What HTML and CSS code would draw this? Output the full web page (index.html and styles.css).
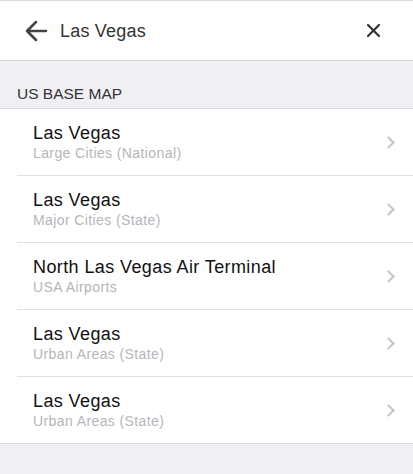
FILE: index.html
```html
<!DOCTYPE html>
<html lang="en">
<head>
  <meta charset="UTF-8">
  <title>Search</title>
  <link rel="stylesheet" href="styles.css">
</head>
<body>
  <div class="search-bar">
    <span class="back">
      <svg width="24" height="22" viewBox="0 0 24 22"><path d="M22 11H3M12 2L3 11l9 9" fill="none" stroke="#444" stroke-width="2.6" stroke-linecap="round" stroke-linejoin="round"/></svg>
    </span>
    <span class="query">Las Vegas</span>
    <span class="clear">
      <svg width="15" height="15" viewBox="0 0 15 15"><path d="M2 2l11 11M13 2L2 13" fill="none" stroke="#333" stroke-width="2.2" stroke-linecap="round"/></svg>
    </span>
  </div>

  <div class="section">US BASE MAP</div>

  <ul class="results">
    <li><div class="txt"><div class="title">Las Vegas</div><div class="sub">Large Cities (National)</div></div><span class="chev"></span></li>
    <li><div class="txt"><div class="title">Las Vegas</div><div class="sub">Major Cities (State)</div></div><span class="chev"></span></li>
    <li><div class="txt"><div class="title">North Las Vegas Air Terminal</div><div class="sub">USA Airports</div></div><span class="chev"></span></li>
    <li><div class="txt"><div class="title">Las Vegas</div><div class="sub">Urban Areas (State)</div></div><span class="chev"></span></li>
    <li><div class="txt"><div class="title">Las Vegas</div><div class="sub">Urban Areas (State)</div></div><span class="chev"></span></li>
  </ul>
</body>
</html>
```

FILE: styles.css
```css
* {
	margin: 0;
	padding: 0;
	box-sizing: border-box;
}

body {
	background: #efeff4;
	font-family: "Liberation Sans", Arial, sans-serif;
	color: #111;
	height: 474px;
	overflow: hidden;
}

.search-bar {
	display: flex;
	align-items: center;
	height: 61px;
	background: #fff;
	border-top: 1px solid #d6d9e0;
	border-bottom: 1px solid #d3d3d6;
	padding: 0 0 0 24px;
}

.back {
	display: flex;
	width: 36px;
}

.query {
	flex: 1;
	font-size: 18px;
	line-height: 22px;
	letter-spacing: 0.2px;
	color: #333;
}

.clear {
	display: flex;
	width: 15px;
	margin-right: 32px;
}

.section {
	height: 48px;
	padding: 23px 17px 4px;
	font-size: 15.5px;
	line-height: 20px;
	color: #333;
	border-bottom: 1px solid #d8d8dc;
}

.results {
	list-style: none;
	background: #fff;
	border-bottom: 1px solid #d8d8dc;
}

.results li {
	display: flex;
	align-items: center;
	margin-left: 17px;
	padding: 13px 0 13px 16px;
	border-bottom: 1px solid #e0e0e3;
}

.results li:last-child {
	border-bottom: none;
}

.txt {
	flex: 1;
}

.title {
	font-size: 18px;
	line-height: 22px;
	letter-spacing: 0.4px;
	color: #111;
}

.sub {
	font-size: 14px;
	line-height: 18px;
	letter-spacing: 0.4px;
	color: #b5b5ba;
}

.chev {
	width: 9px;
	height: 9px;
	border-top: 2px solid #c4c4c8;
	border-right: 2px solid #c4c4c8;
	transform: rotate(45deg);
	margin-right: 20px;
}
```
